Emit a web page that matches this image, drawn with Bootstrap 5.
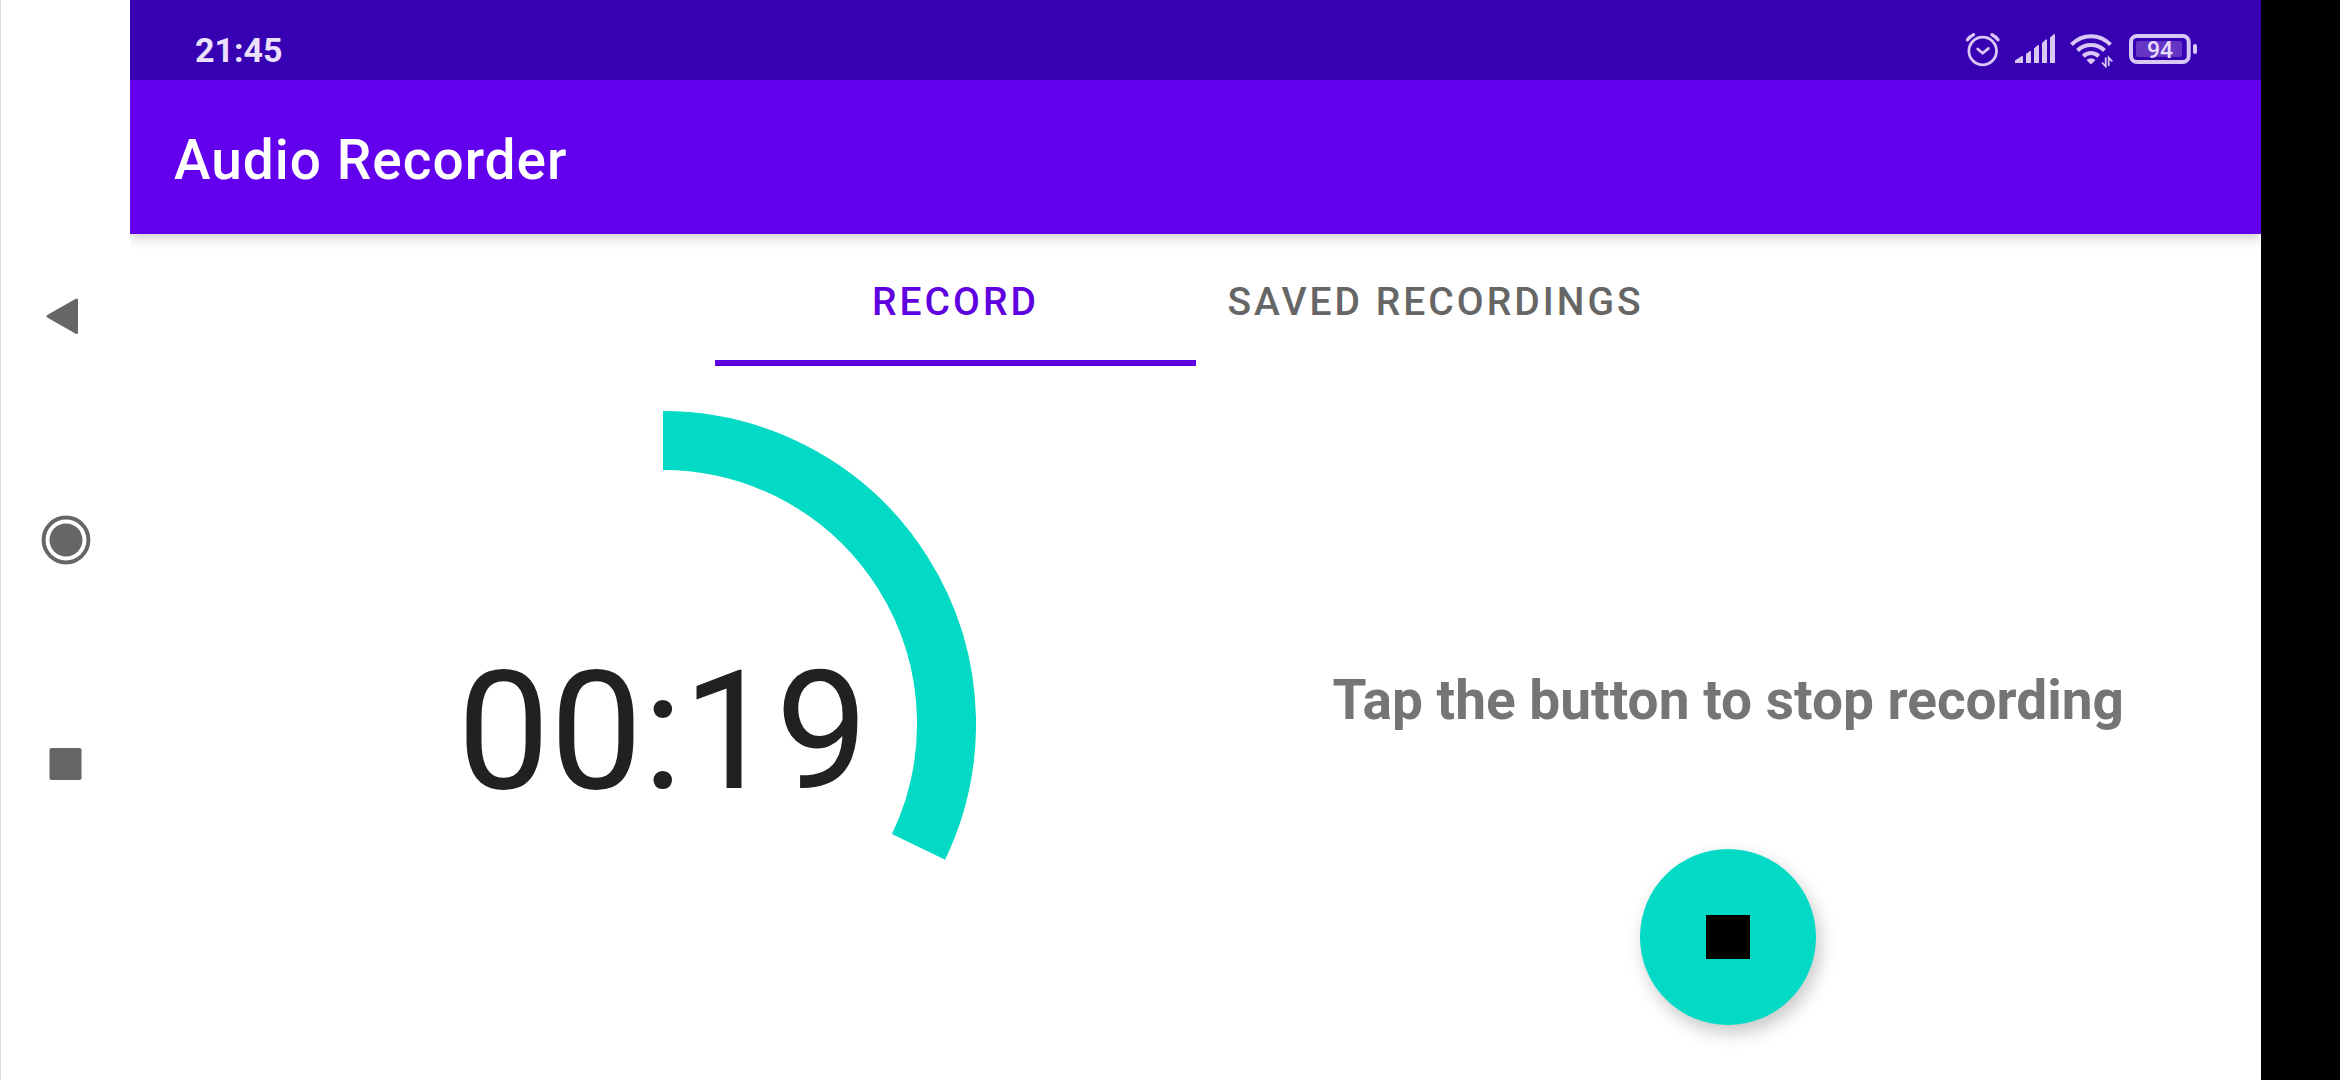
<!DOCTYPE html>
<html lang="en">
<head>
<meta charset="utf-8">
<meta name="viewport" content="width=device-width, initial-scale=1">
<title>Audio Recorder</title>
<link href="https://cdn.jsdelivr.net/npm/bootstrap@5.3.0/dist/css/bootstrap.min.css" rel="stylesheet">
<style>
  :root { --primary: #6200ee; --primary-dark: #3700b3; --accent: #03dac5; --key: #666; }
  body { font-family: Roboto, "Noto Sans", sans-serif; background: #fff; }

  /* system navigation keys on the left, camera cut-out on the right */
  .system-keys { width: 130px; border-left: 1px solid #ddd; }
  .system-keys button { height: 224px; }
  .cutout { width: 79px; background: #000; }

  .status-bar { height: 80px; padding: 20px 64px 0 65px; background: var(--primary-dark); color: #d9c8f5; }
  .clock { font-size: 34px; line-height: 40px; color: #ebe1fb; }
  .status-icons { gap: 14px; }

  .app-bar { height: 154px; padding: 6px 44px 0; background: var(--primary); box-shadow: 0 4px 12px rgba(0, 0, 0, .2); clip-path: inset(0 0 -24px 0); }
  .app-title { font-size: 55px; line-height: 64px; font-weight: 500; letter-spacing: 1px; }

  .tab-strip { display: inline-grid; grid-auto-flow: column; grid-auto-columns: 1fr; }
  .tab-strip .nav-link { width: 100%; height: 132px; padding: 10px 32px 0; background: none; border: 0; border-bottom: 6px solid transparent; border-radius: 0;
    font-size: 39px; line-height: 46px; font-weight: 500; letter-spacing: 3px; color: var(--key); text-transform: uppercase; }
  .tab-strip .nav-link.active { color: #5f00e0; border-bottom-color: #5f00e0; }

  .dial { display: grid; place-items: center; padding-top: 2px; }
  .dial > * { grid-area: 1 / 1; }
  .dial svg { width: 626px; max-width: 100%; height: auto; }
  .elapsed { font-size: 165px; line-height: 192px; padding-top: 16px; color: #212121; }

  .controls { gap: 117px; padding-bottom: 55px; }
  .hint { font-size: 55px; line-height: 64px; color: #757575; }
  .stop-btn { width: 176px; height: 176px; background: var(--accent); box-shadow: 4px 8px 18px rgba(0, 0, 0, .22); }
  .stop-btn:hover { background: #02c9b6; }
</style>
<script defer src="https://cdn.jsdelivr.net/npm/bootstrap@5.3.0/dist/js/bootstrap.bundle.min.js"></script>
</head>
<body>
<div class="d-flex min-vh-100">

  <nav class="system-keys d-flex flex-column justify-content-center flex-shrink-0" aria-label="System">
    <button type="button" class="btn border-0 rounded-0 p-0" aria-label="Back">
      <svg width="50" height="50" viewBox="0 0 50 50" fill="#666" stroke="#666" stroke-width="3" stroke-linejoin="round"><path d="M35.500 9V41.500L7 25.200Z"/></svg>
    </button>
    <button type="button" class="btn border-0 rounded-0 p-0" aria-label="Home">
      <svg width="50" height="50" viewBox="0 0 50 50"><circle cx="25" cy="25" r="22.400" fill="none" stroke="#666" stroke-width="4"/><circle cx="25" cy="25" r="16.500" fill="#666"/></svg>
    </button>
    <button type="button" class="btn border-0 rounded-0 p-0" aria-label="Recent apps">
      <svg width="50" height="50" viewBox="0 0 50 50"><rect x="8.500" y="9" width="32" height="32" rx="2" fill="#666"/></svg>
    </button>
  </nav>

  <div class="d-flex flex-column flex-grow-1">
    <div class="status-bar d-flex align-items-center justify-content-between">
      <time class="clock fw-bold">21:45</time>
      <div class="status-icons d-flex">
        <svg width="36" height="36" viewBox="0 0 36 36" fill="none" stroke="currentColor" stroke-linecap="round" role="img" aria-label="Alarm set">
          <circle cx="17.700" cy="19" r="13.800" stroke-width="2.800"/>
          <path d="M2.500 7.800Q5 4.500 8.500 2.800M27 2.800Q30.500 4.500 33 7.800" stroke-width="3.400"/>
          <path d="M12.700 17L17.700 21.300L23.500 16.400" stroke-width="2.800" stroke-linejoin="round"/>
        </svg>
        <svg width="40" height="36" viewBox="0 0 40 36" fill="currentColor" role="img" aria-label="Mobile signal">
          <path d="M0 31V28.500L6.500 24.300Q8 23.600 8 25V31ZM11 31V22L14.500 19.200Q16 18.400 16 20V31ZM19 31V16.500L22.500 13.300Q24 12.300 24 14V31ZM27 31V11L30.500 7.700Q32 6.700 32 8.500V31ZM35 31V5.500L38.500 2.400Q40 1.400 40 3V31Z"/>
        </svg>
        <svg width="46" height="36" viewBox="0 0 46 36" fill="none" stroke="currentColor" role="img" aria-label="Wi-Fi">
          <path d="M2.500 12.700A26.500 26.500 0 0 1 41.500 12.700" stroke-width="4"/>
          <path d="M8.500 18.500A19.500 19.500 0 0 1 35.500 18.500" stroke-width="4"/>
          <path d="M14.300 24.200A11 11 0 0 1 29.700 24.200" stroke-width="4"/>
          <path d="M17.500 28Q22 24.500 26.500 28L23 31.500Q22 32.500 21 31.500Z" fill="currentColor" stroke="none"/>
          <path d="M36.700 25.500V34.500L33 30.500M39.700 34V25.500L43.300 29.500" stroke-width="1.800"/>
        </svg>
        <svg width="68" height="36" viewBox="0 0 68 36" role="img" aria-label="Battery 94 percent">
          <rect x="2" y="4" width="57.700" height="26" rx="6" fill="none" stroke="currentColor" stroke-width="4"/>
          <rect x="7" y="9" width="46" height="16" rx="2" fill="#6536c6"/>
          <rect x="64" y="12" width="4" height="10" rx="2" fill="currentColor"/>
          <text x="31" y="26" text-anchor="middle" font-size="23" font-weight="500" fill="#e8dcfb">94</text>
        </svg>
      </div>
    </div>

    <header class="app-bar d-flex align-items-center position-relative">
      <h1 class="app-title text-white m-0">Audio Recorder</h1>
    </header>

    <div class="d-flex justify-content-center">
      <ul class="nav tab-strip" role="tablist">
        <li class="nav-item" role="presentation"><button type="button" class="nav-link active" id="record-tab" role="tab" data-bs-toggle="tab" data-bs-target="#record" aria-controls="record" aria-selected="true">Record</button></li>
        <li class="nav-item" role="presentation"><button type="button" class="nav-link" id="saved-tab" role="tab" data-bs-toggle="tab" data-bs-target="#saved" aria-controls="saved" aria-selected="false">Saved recordings</button></li>
      </ul>
    </div>

    <main class="tab-content flex-grow-1 d-flex">
      <section class="tab-pane active flex-grow-1" id="record" role="tabpanel" aria-labelledby="record-tab">
        <div class="row g-0 h-100">
          <div class="col-6 dial">
            <svg viewBox="0 0 626 626" aria-hidden="true">
              <path d="M313 29.500A283.500 283.500 0 0 1 568.500 435.900" fill="none" stroke="#03dac5" stroke-width="59"/>
            </svg>
            <div class="elapsed" role="timer">00:19</div>
          </div>
          <div class="col-6 controls d-flex flex-column align-items-center justify-content-end">
            <p class="hint fw-bold text-center m-0">Tap the button to stop recording</p>
            <button type="button" class="stop-btn btn border-0 rounded-circle p-0 d-flex align-items-center justify-content-center" aria-label="Stop recording">
              <svg width="44" height="44" viewBox="0 0 44 44"><rect width="44" height="44"/></svg>
            </button>
          </div>
        </div>
      </section>
      <section class="tab-pane flex-grow-1" id="saved" role="tabpanel" aria-labelledby="saved-tab"></section>
    </main>
  </div>

  <div class="cutout flex-shrink-0"></div>
</div>
</body>
</html>
